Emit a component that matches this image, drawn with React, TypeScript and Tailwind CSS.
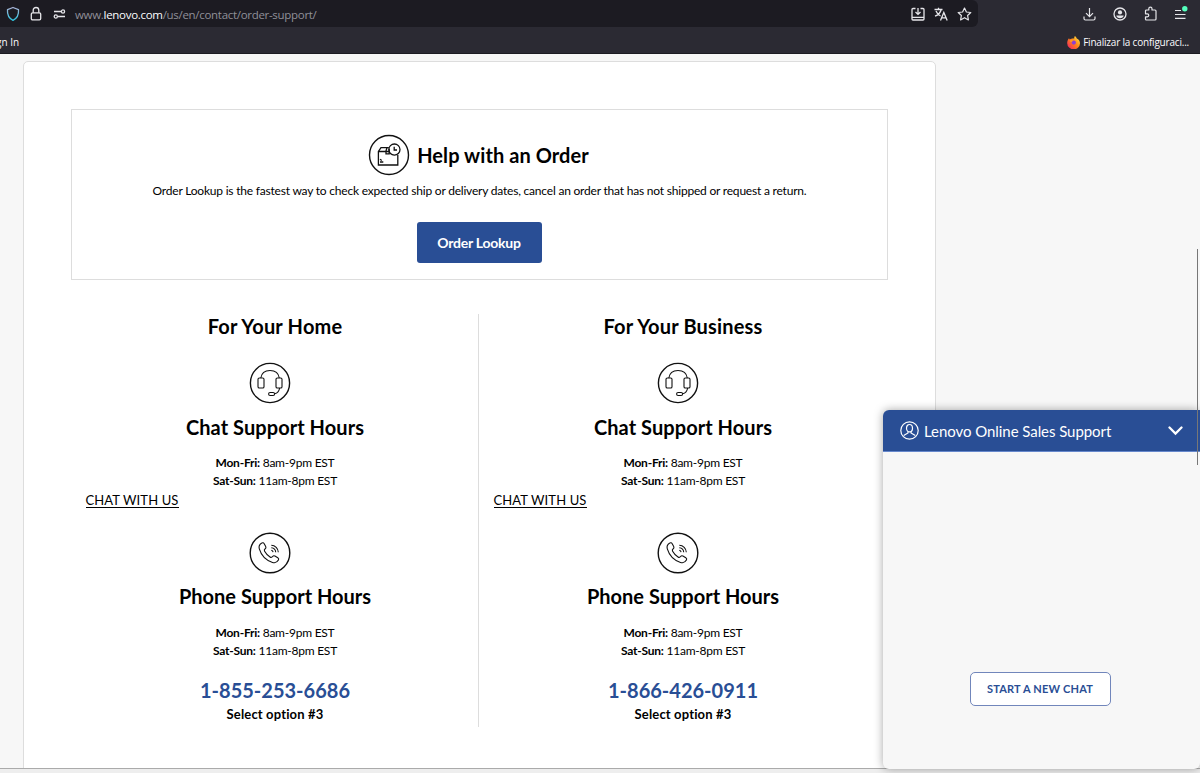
import React from 'react';

interface SupportColumnProps {
    title: string;
    phone: string;
}

const HeadsetIcon: React.FC = () => (
    <svg width="42" height="42" viewBox="0 0 42 42" fill="none" stroke="#111" strokeWidth="1.1">
        <circle cx="21" cy="21" r="19.6" strokeWidth="1.4" />
        <rect x="9" y="16" width="6" height="10" rx="1.3" />
        <rect x="27" y="16" width="6" height="10" rx="1.3" />
        <path d="M11.8 16C12.500 11.300 16 8.500 21 8.500s8.600 2.800 9.300 7.500" />
        <path d="M30.600 26c-.4 3-2 5.200-5 5.800" />
        <rect x="19.600" y="30.500" width="6" height="3" rx="1.500" />
    </svg>
);

const PhoneIcon: React.FC = () => (
    <svg width="42" height="42" viewBox="0 0 42 42" fill="none" stroke="#111" strokeWidth="1.1">
        <circle cx="21" cy="21" r="19.8" strokeWidth="1.4" />
        <path d="M12.800 11c1-.6 1.900-.2 2.400.7l1.500 2.700c.5 1 .3 1.700-.5 2.300-1.100.8-1.200 1.500-.6 2.600 1.300 2.300 3.200 4.300 5.400 5.700 1.100.7 1.900.5 2.600-.5.600-.8 1.400-1 2.300-.5l2.900 1.700c1 .6 1.200 1.400.6 2.400-1.200 2.200-3.400 3.100-5.900 2.300-6.300-2.100-11.300-7.300-13.200-13.600-.7-2.500.2-4.600 2.500-5.800Z" />
        <path d="M22.300 18.300a2.300 2.300 0 0 1 1.800 1.900M22.300 15.700a4.800 4.800 0 0 1 4.400 4.500M22.300 13.300a7.200 7.200 0 0 1 7 7" />
    </svg>
);

const OrderIcon: React.FC = () => (
    <svg width="42" height="42" viewBox="0 0 42 42" fill="none" stroke="#111" strokeWidth="1.3">
        <circle cx="21" cy="21" r="19.5" strokeWidth="1.4" />
        <path d="M20.800 13.700h-7.800l-2.600 3.800v13.500h19.400V21M10.400 17.500h11M17.800 17.500l1.200-3.800M18 17.500v2.300h3.200v-5" />
        <circle cx="26.400" cy="15.600" r="5.600" />
        <path d="M26.200 12.800v3.200h2.800M12 25.300l1.800 1.200M12 28h3.300" />
    </svg>
);

const BrowserBar: React.FC = () => (
    <header className="h-[54px] shrink-0 bg-[#2b2a33] border-b border-[#1c1b22] text-[#fbfbfe] font-['Open_Sans',sans-serif] whitespace-nowrap">
        <div className="flex h-[27px]">
            <div className="flex w-[978px] items-center rounded-r-md bg-[#1c1b22]">
                <svg className="ml-1.5" width="14" height="16" viewBox="0 0 14 16" fill="none">
                    <defs>
                        <linearGradient id="shield" x1="0" y1="0" x2="0" y2="1">
                            <stop offset="0" stopColor="#aab4d8" />
                            <stop offset="1" stopColor="#2ec5e0" />
                        </linearGradient>
                    </defs>
                    <path d="M7 1.5 12.5 3.7C12.9 8.5 11 12.3 7 14.3 3 12.3 1.1 8.5 1.5 3.7Z" stroke="url(#shield)" strokeWidth="1.3" strokeLinejoin="round" />
                </svg>
                <svg className="ml-2.5" width="12" height="16" viewBox="0 0 12 16" fill="none" stroke="#e6e6ea" strokeWidth="1.3">
                    <rect x="1.3" y="6.8" width="9.4" height="7" rx="1.3" />
                    <path d="M3.2 6.8V4.3a2.8 2.8 0 0 1 5.6 0v2.500" />
                </svg>
                <svg className="ml-[11px]" width="13" height="12" viewBox="0 0 13 12" fill="none" stroke="#e6e6ea" strokeWidth="1.3">
                    <path d="M1 3.5h7M5 8.5h7" />
                    <circle cx="10" cy="3.5" r="1.6" />
                    <circle cx="2.8" cy="8.5" r="1.6" />
                </svg>
                <span className="ml-[9px] mt-0.5 text-[11.5px] leading-4 tracking-[-0.3px] text-[#8f8f98]">
                    www.<span className="text-[#fbfbfe]">lenovo.com</span>/us/en/contact/order-support/
                </span>
                <div className="ml-auto mr-1.5 flex items-center gap-[9px]">
                    <svg width="14" height="14" viewBox="0 0 14 14" fill="none" stroke="#e6e6ea" strokeWidth="1.3">
                        <path d="M4.5 1.5H2a1 1 0 0 0-1 1v9.500a1 1 0 0 0 1 1h10a1 1 0 0 0 1-1V2.500a1 1 0 0 0-1-1H9.500M1 10.300h12M7 1v6M4.500 5 7 7.400 9.500 5" />
                    </svg>
                    <svg width="14" height="14" viewBox="0 0 14 14" fill="none" stroke="#e6e6ea" strokeWidth="1.3">
                        <path d="M.5 2.500h8M4.500.7v1.800M7.200 2.500C6.500 5.500 4 8 1 9.200M2 4c1 2.500 2.500 4 4.500 5M6.500 13.500 9.800 5.500l3.400 8M7.600 10.800h4.400" />
                    </svg>
                    <svg width="15" height="14" viewBox="0 0 15 14" fill="none" stroke="#e6e6ea" strokeWidth="1.2" strokeLinejoin="round">
                        <path d="m7.500 1 1.900 4 4.400.5-3.200 3 .8 4.400-3.900-2.200-3.900 2.200.8-4.400-3.200-3L5.600 5Z" />
                    </svg>
                </div>
            </div>
            <div className="ml-auto mr-3 flex items-center gap-[17px]">
                <svg width="13" height="14" viewBox="0 0 13 14" fill="none" stroke="#e6e6ea" strokeWidth="1.2">
                    <path d="M6.500 1v8.500M3 6.200l3.500 3.500L10 6.200M1 9.500v2a1.500 1.500 0 0 0 1.500 1.500h8a1.500 1.500 0 0 0 1.500-1.500v-2" />
                </svg>
                <svg width="14" height="14" viewBox="0 0 14 14" fill="none">
                    <circle cx="7" cy="7" r="6" stroke="#e6e6ea" strokeWidth="1.3" />
                    <circle cx="7" cy="5.4" r="2.1" fill="#e6e6ea" />
                    <path d="M3.300 8.500h7.400c-.3 1.800-1.800 2.800-3.700 2.800s-3.400-1-3.700-2.800Z" fill="#e6e6ea" />
                </svg>
                <svg width="13" height="15" viewBox="0 0 13 15" fill="none" stroke="#e6e6ea" strokeWidth="1.2" strokeLinejoin="round">
                    <path d="M4.800 4V2.700a1.600 1.600 0 0 1 3.200 0V4h3a1 1 0 0 1 1 1v8a1 1 0 0 1-1 1H2.500a1 1 0 0 1-1-1v-2.200h1.800a1.500 1.500 0 0 0 0-3H1.500V5a1 1 0 0 1 1-1Z" />
                </svg>
                <svg width="14" height="18" viewBox="0 0 14 18" fill="none" stroke="#e6e6ea" strokeWidth="1.2">
                    <path d="M1 5.500h6M1 9.500h10.500M1 13.300h10.500" />
                    <circle cx="10.8" cy="3.7" r="2.7" fill="#54ffbd" stroke="none" />
                </svg>
            </div>
        </div>
        <div className="flex h-[26px] items-center justify-between pt-1 text-[10px]">
            <span className="-ml-[4px]">gn In</span>
            <div className="mr-[11px] flex items-center gap-[3px]">
                <svg width="13" height="13" viewBox="0 0 13 13">
                    <defs>
                        <linearGradient id="fox" x1="1" y1="0" x2="0" y2="1">
                            <stop offset="0" stopColor="#fff44f" />
                            <stop offset=".45" stopColor="#ff8a16" />
                            <stop offset="1" stopColor="#f5156c" />
                        </linearGradient>
                    </defs>
                    <path d="M8 0c1 1 1.500 1.700 1.800 2.500C11.700 3.300 13 5 13 7.200A6.300 6 0 0 1 .2 7.300C.1 5.500.8 3.600 2 2.200l.7 1.300C4 2.500 6 2.300 7.300 2.500 7 1.600 7.400.6 8 0Z" fill="url(#fox)" />
                    <circle cx="6.8" cy="6.6" r="2.1" fill="#8b3fd6" />
                    <path d="M2.700 4.200c1.500-.7 2.800 0 3.700.7-1.300 0-1.600.8-2.700 1.300Z" fill="#ff9a22" />
                </svg>
                <span className="tracking-[-0.2px]">Finalizar la configuraci...</span>
            </div>
        </div>
    </header>
);

const Hours: React.FC = () => (
    <div className="text-[12px] leading-[18px] tracking-[-0.24px]">
        <p><b>Mon-Fri:</b> 8am-9pm EST</p>
        <p><b>Sat-Sun:</b> 11am-8pm EST</p>
    </div>
);

const SupportColumn: React.FC<SupportColumnProps> = ({ title, phone }) => (
    <div className="flex h-[413px] w-[408px] flex-col items-center whitespace-nowrap text-center">
        <h2 className="text-[20px] font-bold leading-6 tracking-[0.18px]">{title}</h2>
        <div className="mr-[10px] mt-6">
            <HeadsetIcon />
        </div>
        <h3 className="mt-[11px] text-[20px] font-bold leading-6 tracking-[0.06px]">Chat Support Hours</h3>
        <div className="mt-[15px]">
            <Hours />
        </div>
        <a href="#" className="ml-[14.5px] mt-[3px] self-start border-b border-black text-[13px] leading-[14px] tracking-[0.12px]">CHAT WITH US</a>
        <div className="mr-[10px] mt-6">
            <PhoneIcon />
        </div>
        <h3 className="mt-[10px] text-[20px] font-bold leading-6">Phone Support Hours</h3>
        <div className="mt-4">
            <Hours />
        </div>
        <p className="mt-[18px] text-[20px] font-bold leading-6 text-[#294e95]">{phone}</p>
        <p className="mt-[3px] text-[13px] font-bold leading-[18px] tracking-[0.15px]">Select option #3</p>
    </div>
);

const ChatPanel: React.FC = () => (
    <aside className="absolute right-0 top-[410px] flex h-[359px] w-[317px] flex-col">
        <div className="flex h-full flex-col rounded-md bg-[#f7f7f7] shadow-[0_0_10px_rgba(0,0,0,0.35)]">
            <div className="flex h-[42px] items-center rounded-tl-md border-b border-[#6688cc] bg-[#294e95] pl-[17px] pr-[17px] text-white">
                <svg width="19" height="19" viewBox="0 0 19 19" fill="none" stroke="#fff" strokeWidth="1.2">
                    <circle cx="9.5" cy="9.5" r="8.7" />
                    <ellipse cx="9.5" cy="7.200" rx="3" ry="3.7" />
                    <path d="M8 10.400v1.500l-4.300 2.600M11 10.400v1.500l4.300 2.600" />
                </svg>
                <span className="ml-[5px] whitespace-nowrap text-[15px] leading-5 tracking-[-0.06px]">Lenovo Online Sales Support</span>
                <svg className="ml-auto" width="15" height="10" viewBox="0 0 15 10" fill="none" stroke="#fff" strokeWidth="2.3" strokeLinecap="round">
                    <path d="m1.500 1.500 6 6 6-6" />
                </svg>
            </div>
            <div className="flex grow items-end justify-center pb-[63px] pr-[3px]">
                <button className="h-[34px] w-[141px] whitespace-nowrap rounded-[5px] border border-[#7186bb] bg-white text-[11px] font-bold tracking-[0.18px] text-[#294e95]">
                    START A NEW CHAT
                </button>
            </div>
        </div>
    </aside>
);

const App: React.FC = () => {
    return (
        <div className="relative flex h-[773px] w-[1200px] flex-col overflow-hidden bg-[#eee] font-['Lato',sans-serif] text-black">
            <BrowserBar />
            <main className="h-[715px] overflow-hidden border-b border-[#aaa] bg-[#f7f7f7] pl-[23px] pt-[7px]">
                <div className="h-[720px] w-[913px] rounded-[5px] border border-[#ddd] bg-white px-[47px] pt-[47px]">
                    <section className="flex h-[171px] w-[817px] flex-col items-center whitespace-nowrap border border-[#ddd] pt-6">
                        <div className="mr-[2px] flex items-center gap-[7px]">
                            <OrderIcon />
                            <h1 className="text-[20px] font-bold leading-6 tracking-[0.08px]">Help with an Order</h1>
                        </div>
                        <p className="mt-[6px] text-[12px] leading-[18px] tracking-[-0.205px]">
                            Order Lookup is the fastest way to check expected ship or delivery dates, cancel an order that has not shipped or request a return.
                        </p>
                        <button className="mr-px mt-[22px] h-[41px] w-[125px] rounded-[3px] bg-[#294e95] text-[14px] font-bold tracking-[-0.25px] text-white">Order Lookup</button>
                    </section>
                    <section className="mt-[34px] flex">
                        <SupportColumn title="For Your Home" phone="1-855-253-6686" />
                        <div className="w-px shrink-0 -ml-px bg-[#ddd]" />
                        <SupportColumn title="For Your Business" phone="1-866-426-0911" />
                    </section>
                </div>
            </main>
            <ChatPanel />
            <div className="absolute right-[2px] top-[249px] h-[216px] w-[1.5px] bg-[#777]" />
        </div>
    );
};

export default App;
